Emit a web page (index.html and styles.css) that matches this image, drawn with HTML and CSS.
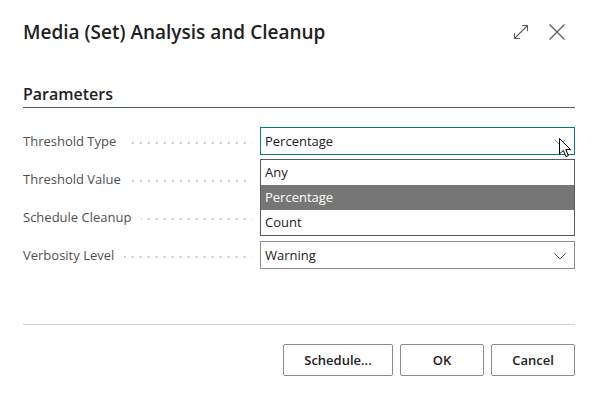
FILE: index.html
```html
<!DOCTYPE html>
<html>
<head>
    <title>Media (Set) Analysis and Cleanup</title>
    <link rel="stylesheet" href="styles.css">
</head>
<body>
    <div class="dialog">
        <div class="dialog-header">
            <h1>Media (Set) Analysis and Cleanup</h1>
            <div class="header-actions">
                <button class="icon-btn" title="Expand">
                    <svg width="16" height="16" viewBox="0 0 16 16"><path d="M1.5 14.5 L14.5 1.5 M9 1.5 H14.5 V7 M1.5 9 V14.5 H7" fill="none" stroke="#5c5c5c" stroke-width="1.1"/></svg>
                </button>
                <button class="icon-btn" title="Close">
                    <svg width="16" height="16" viewBox="0 0 16 16"><path d="M0.5 0.5 L15.5 15.5 M15.5 0.5 L0.5 15.5" fill="none" stroke="#5c5c5c" stroke-width="1.3"/></svg>
                </button>
            </div>
        </div>

        <h2 class="group">Parameters</h2>

        <div class="fields">
            <div class="field">
                <div class="caption"><label>Threshold Type</label><span class="leader"></span></div>
                <div class="control focused">
                    <span>Percentage</span>
                    <svg class="chevron" width="12" height="7" viewBox="0 0 12 7"><path d="M0.5 0.5 L6 6 L11.5 0.5" fill="none" stroke="#6f8f99" stroke-width="1"/></svg>
                    <ul class="dropdown">
                        <li>Any</li>
                        <li class="selected">Percentage</li>
                        <li>Count</li>
                    </ul>
                    <svg class="cursor" width="13" height="20" viewBox="0 0 13 20"><path d="M0.5 0.5 V16 L4.3 12.4 L7 18.6 L9.4 17.6 L6.8 11.6 H11.6 Z" fill="#fff" stroke="#000" stroke-width="1"/></svg>
                </div>
            </div>
            <div class="field">
                <div class="caption"><label>Threshold Value</label><span class="leader"></span></div>
                <div class="control"></div>
            </div>
            <div class="field">
                <div class="caption"><label>Schedule Cleanup</label><span class="leader"></span></div>
                <div class="control"></div>
            </div>
            <div class="field">
                <div class="caption"><label>Verbosity Level</label><span class="leader"></span></div>
                <div class="control">
                    <span>Warning</span>
                    <svg class="chevron" width="12" height="7" viewBox="0 0 12 7"><path d="M0.5 0.5 L6 6 L11.5 0.5" fill="none" stroke="#5c5c5c" stroke-width="1"/></svg>
                </div>
            </div>
        </div>

        <div class="dialog-footer">
            <button class="btn wide">Schedule...</button>
            <button class="btn">OK</button>
            <button class="btn">Cancel</button>
        </div>
    </div>
</body>
</html>
```

FILE: styles.css
```css
body{
    margin: 0;
    background: #fff;
    font-family: "Segoe UI", "Open Sans", "Noto Sans", sans-serif;
    color: #212121;
}
.dialog{
    padding: 0 24px 0 23px;
}
.dialog-header{
    display: flex;
    align-items: center;
    justify-content: space-between;
    padding-top: 20px;
}
h1{
    margin: 0;
    font-size: 19px;
    line-height: 24px;
    font-weight: 600;
}
.header-actions{
    display: flex;
    gap: 20px;
    margin-right: 10px;
}
.icon-btn{
    border: 0;
    background: none;
    padding: 0;
    width: 16px;
    height: 16px;
}
.icon-btn svg{
    display: block;
}
.group{
    margin: 40px 0 0 0;
    font-size: 16px;
    line-height: 20px;
    font-weight: 600;
    padding-bottom: 3px;
    border-bottom: 1px solid #505f6d;
}
.fields{
    margin-top: 14px;
}
.field{
    display: flex;
    align-items: center;
    height: 38px;
}
.caption{
    width: 229px;
    margin-right: 8px;
    display: flex;
    align-items: center;
}
.caption label{
    font-size: 13px;
    color: #505050;
    white-space: nowrap;
}
.leader{
    flex: 1;
    height: 2px;
    margin-left: 10px;
    margin-top: 3px;
    background-image: linear-gradient(to right, #c8c8c8 2px, transparent 2px);
    background-size: 8px 2px;
    background-position: right center;
    background-repeat: repeat-x;
}
.control{
    position: relative;
    flex: 1;
    height: 26px;
    border: 1px solid #8a8f98;
    display: flex;
    align-items: center;
    padding: 0 4px;
    font-size: 13px;
}
.control.focused{
    border-color: #00807a;
}
.chevron{
    position: absolute;
    right: 8px;
    top: 11px;
}
.dropdown{
    position: absolute;
    top: calc(100% + 5px);
    left: -1px;
    right: -1px;
    margin: 0;
    padding: 0;
    list-style: none;
    background: #fff;
    border: 1px solid #5a5a5a;
    z-index: 2;
}
.dropdown li{
    height: 25px;
    line-height: 25px;
    padding-left: 4px;
}
.dropdown li.selected{
    background: #767676;
    color: #fff;
}
.cursor{
    position: absolute;
    left: calc(100% - 15px);
    top: 10px;
    z-index: 3;
}
.dialog-footer{
    margin-top: 50px;
    border-top: 1px solid #d0d0d0;
    padding-top: 19px;
    display: flex;
    justify-content: flex-end;
    gap: 7px;
}
.btn{
    width: 84px;
    height: 32px;
    background: #fff;
    border: 1px solid #8a8a8a;
    border-radius: 2px;
    font-family: inherit;
    font-size: 13px;
    font-weight: 600;
    color: #212121;
}
.btn.wide{
    width: 110px;
}
```
